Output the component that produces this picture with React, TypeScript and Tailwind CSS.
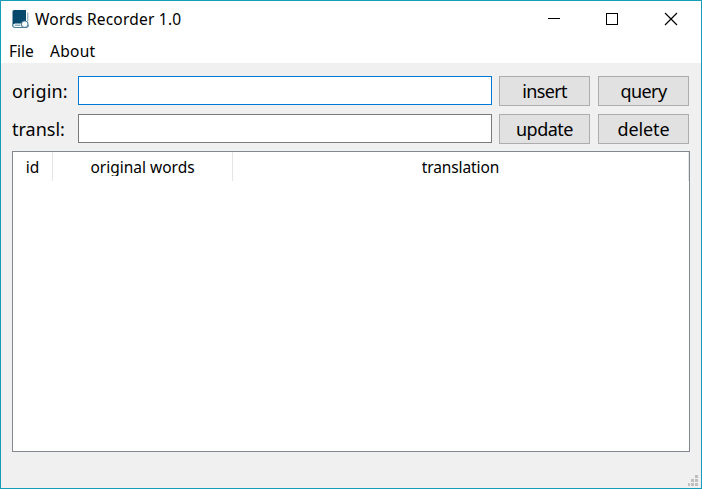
import type { ReactNode } from "react";

function Label({ children, className = "" }: { children: ReactNode; className?: string }) {
  return <span className={`block whitespace-pre ${className}`}>{children}</span>;
}

function Button({ children, className = "" }: { children: ReactNode; className?: string }) {
  return (
    <button className={`flex h-[30px] w-[91px] items-center justify-center border border-[#adadad] bg-[#e1e1e1] text-[18px] leading-6 ${className}`}>
      {children}
    </button>
  );
}

function AppIcon() {
  return (
    <svg width="18" height="19" viewBox="0 0 18 19" className="ml-[11px] mt-[9px] shrink-0">
      <path d="M2.2 0H14v11.2a4 4 0 0 0-4.2 2.3H3L.5 15V2C.5.7 1 0 2.2 0Z" fill="#07486d" />
      <path d="M15.8 2.5V11" stroke="#7197ad" strokeWidth="1" />
      <path d="M.5 14.5c0 2.2 1 3 2.8 3H10" stroke="#4d7f9b" strokeWidth="1.2" fill="none" />
      <path d="M3 15.2h5.5" stroke="#7197ad" strokeWidth="1.2" fill="none" />
      <circle cx="12.7" cy="14.2" r="3.2" fill="white" stroke="#4d7f9b" strokeWidth="1.1" />
      <path d="M10 17.5h5.5M15.8 14.8l1 1.7" stroke="#4d7f9b" strokeWidth="1.1" />
    </svg>
  );
}

export default function App() {
  return (
    <div className="flex h-[489px] w-[702px] flex-col overflow-hidden border border-[#189db8] bg-[#f0f0f0] font-['Noto_Sans','Open_Sans',sans-serif] text-black">
      <header className="flex h-[37px] shrink-0 bg-white">
        <AppIcon />
        <Label className="ml-[5px] mt-[6px] text-[15.5px] leading-6 tracking-[0.22px]">Words Recorder 1.0</Label>
        <svg className="ml-auto mr-[23px] mt-[11px]" width="131" height="14" viewBox="0 0 131 14" fill="none" stroke="black" shapeRendering="crispEdges">
          <path d="M1 6.5h12M59.5 1.5h11v11h-11z" />
          <path d="m118 1 12 12m0-12-12 12" shapeRendering="geometricPrecision" strokeWidth="1.2" />
        </svg>
      </header>
      <nav className="flex h-[25px] shrink-0 bg-white pl-2 text-[15.5px] leading-[26px]">
        <Label className="w-[41px]">File</Label>
        <Label className="tracking-[0.3px]">About</Label>
      </nav>
      <main className="flex flex-col px-[11px] pt-[13px]">
        <div className="flex h-[38px]">
          <Label className="w-[66px] pt-[3px] text-[18px] leading-6 tracking-[0.15px]">origin:</Label>
          <input className="mr-[7px] h-[29px] w-[414px] border border-[#0078d7] bg-white outline-none" />
          <div className="flex gap-2">
            <Button className="tracking-[-0.65px]">insert</Button>
            <Button className="tracking-[-0.6px]">query</Button>
          </div>
        </div>
        <div className="flex h-[37px]">
          <Label className="w-[66px] pt-[3px] text-[18px] leading-6">transl:</Label>
          <input className="mr-[7px] h-[29px] w-[414px] border border-[#7a7a7a] bg-white outline-none" />
          <div className="flex gap-2">
            <Button className="tracking-[-0.5px]">update</Button>
            <Button className="tracking-[-0.15px]">delete</Button>
          </div>
        </div>
        <section className="h-[301px] w-[678px] border border-[#828790] bg-white">
          <div className="flex h-[29px] text-[15.5px] leading-[30px]">
            <div className="flex w-10 justify-center border-r border-[#e5e5e5]"><Label>id</Label></div>
            <div className="flex w-[180px] justify-center border-r border-[#e5e5e5]"><Label className="h-6 overflow-hidden">original words</Label></div>
            <div className="flex w-[456px] justify-center border-r border-[#e5e5e5]"><Label className="tracking-[-0.1px]">translation</Label></div>
          </div>
        </section>
      </main>
      <footer className="mt-auto flex justify-end pb-[2px] pr-[3px]">
        <svg width="10" height="11" fill="#bfbfbf" shapeRendering="crispEdges">
          <path d="M7 0h3v3H7zM3 4h3v3H3zM7 4h3v3H7zM0 8h2v3H0zM3 8h3v3H3zM7 8h3v3H7z" />
        </svg>
      </footer>
    </div>
  );
}
